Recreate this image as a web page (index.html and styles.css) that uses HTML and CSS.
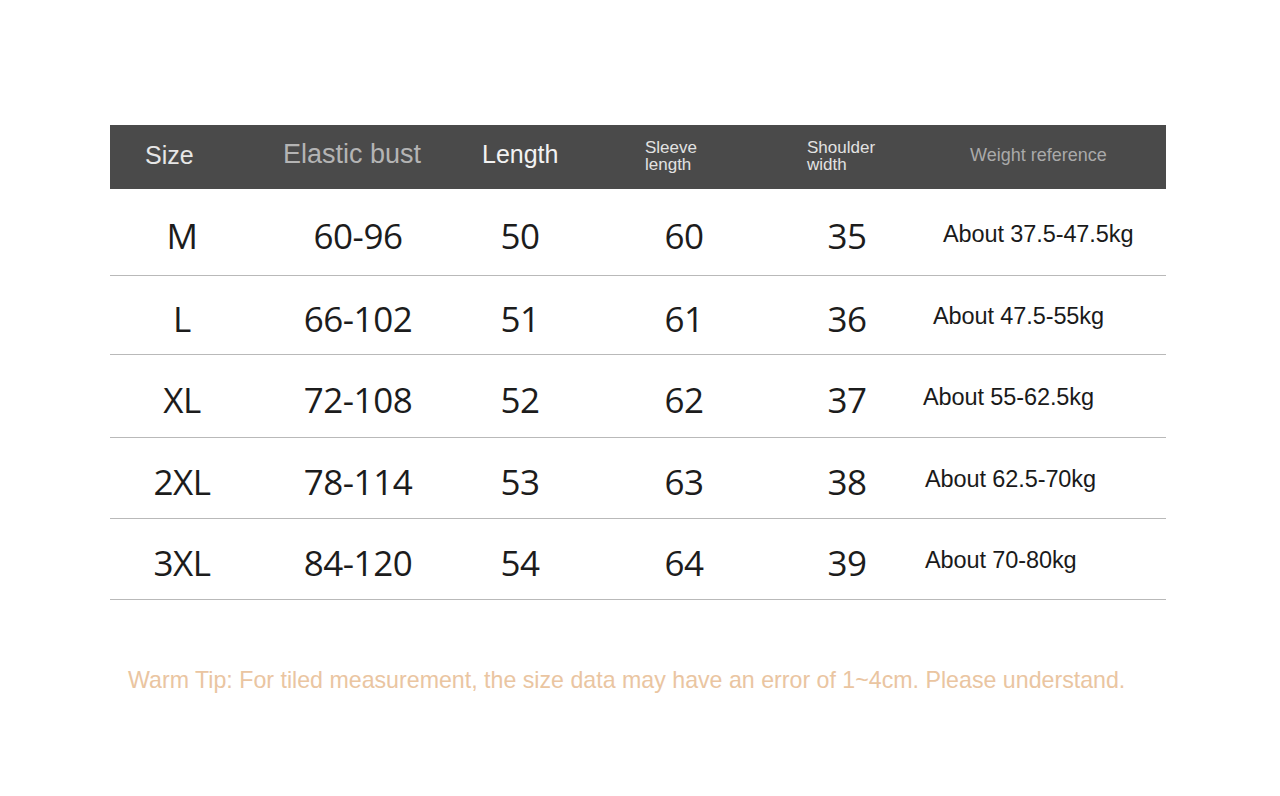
FILE: index.html
```html
<!DOCTYPE html>
<html lang="en">
<head>
<meta charset="utf-8">
<title>Size chart</title>
<link rel="stylesheet" href="styles.css">
</head>
<body>
<main class="page">
  <section class="chart">
    <div class="row head">
      <div class="hc hc-size">Size</div>
      <div class="hc hc-bust">Elastic bust</div>
      <div class="hc hc-len">Length</div>
      <div class="hc hc-sleeve">Sleeve<br>length</div>
      <div class="hc hc-shoulder">Shoulder<br>width</div>
      <div class="hc hc-weight">Weight reference</div>
    </div>
    <div class="row body r1">
      <div class="c">M</div><div class="c">60-96</div><div class="c">50</div><div class="c">60</div><div class="c">35</div><div class="w">About 37.5-47.5kg</div>
    </div>
    <div class="row body r2">
      <div class="c">L</div><div class="c">66-102</div><div class="c">51</div><div class="c">61</div><div class="c">36</div><div class="w">About 47.5-55kg</div>
    </div>
    <div class="row body r3">
      <div class="c">XL</div><div class="c">72-108</div><div class="c">52</div><div class="c">62</div><div class="c">37</div><div class="w">About 55-62.5kg</div>
    </div>
    <div class="row body r4">
      <div class="c">2XL</div><div class="c">78-114</div><div class="c">53</div><div class="c">63</div><div class="c">38</div><div class="w">About 62.5-70kg</div>
    </div>
    <div class="row body r5">
      <div class="c">3XL</div><div class="c">84-120</div><div class="c">54</div><div class="c">64</div><div class="c">39</div><div class="w">About 70-80kg</div>
    </div>
  </section>
  <p class="tip">Warm Tip: For tiled measurement, the size data may have an error of 1~4cm. Please understand.</p>
</main>
</body>
</html>
```

FILE: styles.css
```css
html, body {
  margin: 0;
  padding: 0;
  background: #ffffff;
}

.page {
  width: 1280px;
  height: 796px;
  padding-top: 125px;
  box-sizing: border-box;
}

.chart {
  margin-left: 110px;
  width: 1056px;
}

.row {
  display: grid;
  grid-template-columns: 144px 208px 116px 212px 114px 262px;
  align-items: center;
}

.head {
  height: 64px;
  box-sizing: border-box;
  padding-bottom: 5px;
  background: #4a4a4a;
  font-family: "Liberation Sans", Arial, sans-serif;
}

.hc {
  text-align: left;
  white-space: nowrap;
}

.hc-size { padding-left: 35px; font-size: 25px; color: #e6e6e6; padding-top: 2px; }
.hc-bust { padding-left: 29px; font-size: 27px; color: #b4b4b4; }
.hc-len { padding-left: 20px; font-size: 25px; color: #f2f2f2; }
.hc-sleeve { padding-left: 67px; font-size: 17px; line-height: 17px; color: #e2e2e2; padding-top: 2px; }
.hc-shoulder { padding-left: 17px; font-size: 17px; line-height: 17px; color: #e2e2e2; padding-top: 2px; }
.hc-weight { padding-left: 66px; font-size: 18px; color: #a9a9a9; padding-top: 2px; }

.body {
  border-bottom: 1.5px solid #b9b9b9;
  font-family: "Open Sans", "Noto Sans", sans-serif;
  color: #1c1c1c;
}

.r1 { height: 86px; }
.r2 { height: 78px; }
.r3 { height: 82px; }
.r4 { height: 80px; }
.r5 { height: 80px; }

.c {
  text-align: center;
  font-size: 35px;
  letter-spacing: -0.5px;
  padding-top: 6px;
}

.w {
  font-family: "Liberation Sans", Arial, sans-serif;
  font-size: 23.5px;
  letter-spacing: -0.1px;
  color: #1a1a1a;
  white-space: nowrap;
  padding-top: 2px;
}

.r1 .w { padding-left: 39px; padding-top: 5px; }
.r2 .w { padding-left: 29px; }
.r3 .w { padding-left: 19px; }
.r4 .w { padding-left: 21px; }
.r5 .w { padding-left: 21px; }

.tip {
  margin: 67px 0 0 128px;
  font-family: "Liberation Sans", Arial, sans-serif;
  font-size: 23.2px;
  color: #eac5a1;
  white-space: nowrap;
}
```
